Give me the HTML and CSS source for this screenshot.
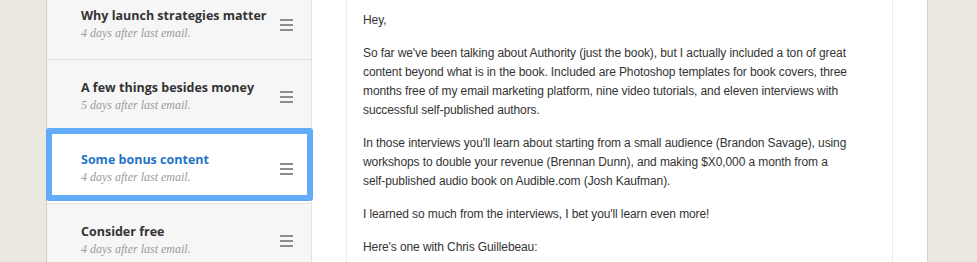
FILE: index.html
```html
<!DOCTYPE html>
<html>
<head>
<meta charset="utf-8">
<link rel="stylesheet" href="styles.css">
</head>
<body>
<div class="page">
  <div class="gutter gutter-left"></div>
  <aside class="sidebar">
    <ul class="emails">
      <li class="email">
        <div class="email-text">
          <div class="email-title">Why launch strategies matter</div>
          <div class="email-delay">4 days after last email.</div>
        </div>
        <svg class="handle" width="13" height="12" viewBox="0 0 13 12"><rect x="0" y="0" width="13" height="2"/><rect x="0" y="5" width="13" height="2"/><rect x="0" y="10" width="13" height="2"/></svg>
      </li>
      <li class="email">
        <div class="email-text">
          <div class="email-title">A few things besides money</div>
          <div class="email-delay">5 days after last email.</div>
        </div>
        <svg class="handle" width="13" height="12" viewBox="0 0 13 12"><rect x="0" y="0" width="13" height="2"/><rect x="0" y="5" width="13" height="2"/><rect x="0" y="10" width="13" height="2"/></svg>
      </li>
      <li class="email selected">
        <div class="email-text">
          <div class="email-title">Some bonus content</div>
          <div class="email-delay">4 days after last email.</div>
        </div>
        <svg class="handle" width="13" height="12" viewBox="0 0 13 12"><rect x="0" y="0" width="13" height="2"/><rect x="0" y="5" width="13" height="2"/><rect x="0" y="10" width="13" height="2"/></svg>
      </li>
      <li class="email">
        <div class="email-text">
          <div class="email-title">Consider free</div>
          <div class="email-delay">4 days after last email.</div>
        </div>
        <svg class="handle" width="13" height="12" viewBox="0 0 13 12"><rect x="0" y="0" width="13" height="2"/><rect x="0" y="5" width="13" height="2"/><rect x="0" y="10" width="13" height="2"/></svg>
      </li>
    </ul>
  </aside>
  <main class="main">
    <article class="article">
      <p>Hey,</p>
      <p>So far we've been talking about Authority (just the book), but I actually included a ton of great content beyond what is in the book. Included are Photoshop templates for book covers, three months free of my email marketing platform, nine video tutorials, and eleven interviews with successful self-published authors.</p>
      <p>In those interviews you'll learn about starting from a small audience (Brandon Savage), using workshops to double your revenue (Brennan Dunn), and making $X0,000 a month from a <span class="nobr">self-published</span> audio book on Audible.com (Josh Kaufman).</p>
      <p>I learned so much from the interviews, I bet you'll learn even more!</p>
      <p>Here's one with Chris Guillebeau:</p>
    </article>
  </main>
  <div class="gutter gutter-right"></div>
</div>
</body>
</html>
```
FILE: styles.css
```css
html, body {
  margin: 0;
  padding: 0;
  height: 100%;
  overflow: hidden;
  background: #ffffff;
}

.page {
  display: flex;
  height: 262px;
  overflow: hidden;
}

.gutter {
  background: #ebe8df;
  flex: none;
}

.gutter-left {
  width: 46px;
  border-right: 1px solid #d3d0c5;
}

.gutter-right {
  width: 49px;
  border-left: 1px solid #d3d0c5;
}

.sidebar {
  width: 264px;
  flex: none;
  background: #f6f6f6;
  border-right: 1px solid #e4e4e4;
}

.emails {
  list-style: none;
  margin: -12px 0 0 0;
  padding: 0;
}

.email {
  position: relative;
  height: 71px;
  border-bottom: 1px solid #e2e2e2;
  display: flex;
  align-items: center;
  padding: 0 18px 0 34px;
}

.email-text {
  flex: 1;
  padding-top: 2px;
}

.email-title {
  font-family: "Open Sans", sans-serif;
  font-weight: 700;
  font-size: 12.5px;
  line-height: 17px;
  color: #333333;
}

.email-delay {
  font-family: "Liberation Serif", serif;
  font-style: italic;
  font-size: 12px;
  line-height: 19px;
  color: #9a9a9a;
}

.handle {
  flex: none;
  fill: #8c8c8c;
  margin-top: 3px;
}

.email.selected {
  background: #ffffff;
}

.email.selected .email-title {
  color: #1f74c8;
}

.email.selected::after {
  content: "";
  position: absolute;
  top: -4px;
  bottom: 2px;
  left: -1px;
  right: -2px;
  border: 6px solid #62abf8;
  border-radius: 3px;
  pointer-events: none;
}

.main {
  flex: 1;
  padding: 0 34px;
  background: #ffffff;
}

.article {
  height: 100%;
  border-left: 1px solid #ececec;
  border-right: 1px solid #ececec;
  padding: 11px 24px 0 16px;
  font-family: "Liberation Sans", Arial, sans-serif;
  font-size: 12px;
  letter-spacing: -0.1px;
  line-height: 19px;
  color: #333333;
}

.article p {
  margin: 0 0 14px 0;
}

.nobr {
  white-space: nowrap;
}
```
